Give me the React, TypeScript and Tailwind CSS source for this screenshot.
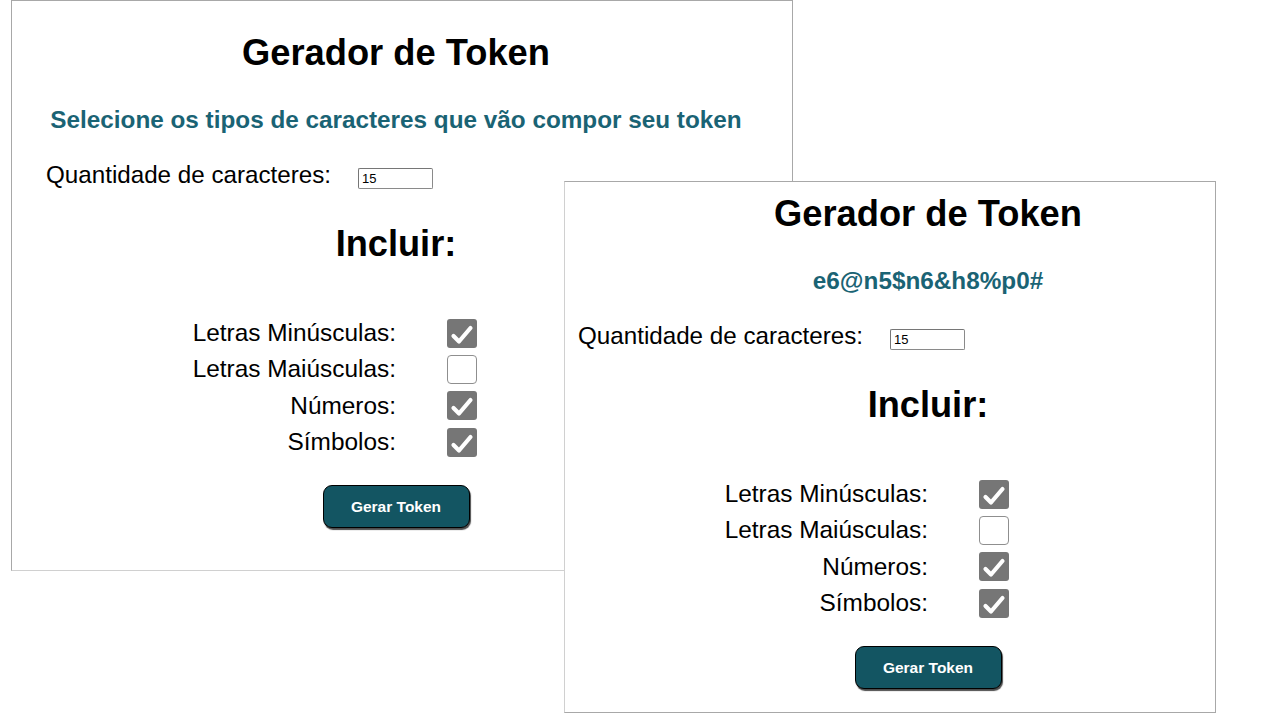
import React from "react";

const font = { fontFamily: '"Liberation Sans", Arial, sans-serif' };

function Check({ checked }: { checked: boolean }) {
  if (!checked) {
    return <div className="w-[30px] h-[29px] rounded-[4px] border border-[#8f8f8f] bg-white" />;
  }
  return (
    <div className="w-[30px] h-[29px] rounded-[3px] bg-[#767676] flex items-center justify-center">
      <svg width="30" height="29" viewBox="0 0 30 29">
        <polyline
          points="6.5,17 12,22.5 23.5,9"
          fill="none"
          stroke="white"
          strokeWidth="4.2"
          strokeLinecap="round"
          strokeLinejoin="round"
        />
      </svg>
    </div>
  );
}

function TokenPage({ token }: { token?: string }) {
  const rows: [string, boolean][] = [
    ["Letras Minúsculas:", true],
    ["Letras Maiúsculas:", false],
    ["Números:", true],
    ["Símbolos:", true],
  ];
  return (
    <div className="w-[768px] flex flex-col text-black" style={font}>
      <h1 className="mt-[31px] text-center text-[36.3px] leading-[41px] font-bold">Gerador de Token</h1>
      <p className="mt-[33px] text-center text-[24.3px] leading-[28px] font-bold text-[#1a6374]">
        {token ?? "Selecione os tipos de caracteres que vão compor seu token"}
      </p>
      <div className="mt-[27px] flex items-end pl-[34px]">
        <span className="text-[24.2px] leading-[28px]">Quantidade de caracteres:</span>
        <input
          readOnly
          value="15"
          className="ml-[27px] mb-[0.5px] w-[75px] h-[21px] border border-[#8a8a8a] border-t-[#767676] border-l-[#767676] rounded-[2px] pl-[3px] text-[13px] leading-[19px] text-black bg-white outline-none"
          style={font}
        />
      </div>
      <h2 className="mt-[34px] text-center text-[36.2px] leading-[41px] font-bold">Incluir:</h2>
      <div className="mt-[51px] grid grid-cols-2">
        {rows.map(([label, checked]) => (
          <React.Fragment key={label}>
            <div className="h-[36.3px] flex items-center justify-end text-[24.4px] leading-[28px]">{label}</div>
            <div className="h-[36.3px] flex items-center pl-[51px]">
              <Check checked={checked} />
            </div>
          </React.Fragment>
        ))}
      </div>
      <div className="mt-[25px] flex justify-center">
        <button className="w-[147px] h-[43px] rounded-[9px] bg-[#135562] border border-black shadow-[1px_2px_1px_rgba(0,0,0,0.7)] text-white font-bold text-[15.5px]" style={font}>
          Gerar Token
        </button>
      </div>
    </div>
  );
}

export default function App() {
  return (
    <div className="relative w-[1280px] h-[720px] bg-white overflow-hidden">
      <div className="absolute left-[11px] top-0 w-[782px] h-[571px] border border-[#a8a8a8] border-b-[#d0d0d0] bg-white overflow-hidden">
        <TokenPage />
      </div>
      <div className="absolute left-[564px] top-[181px] w-[652px] h-[532px] border border-[#a8a8a8] border-l-[#d0d0d0] bg-white overflow-hidden">
        <div className="-ml-[21px] -mt-[20px]">
          <TokenPage token="e6@n5$n6&h8%p0#" />
        </div>
      </div>
    </div>
  );
}
